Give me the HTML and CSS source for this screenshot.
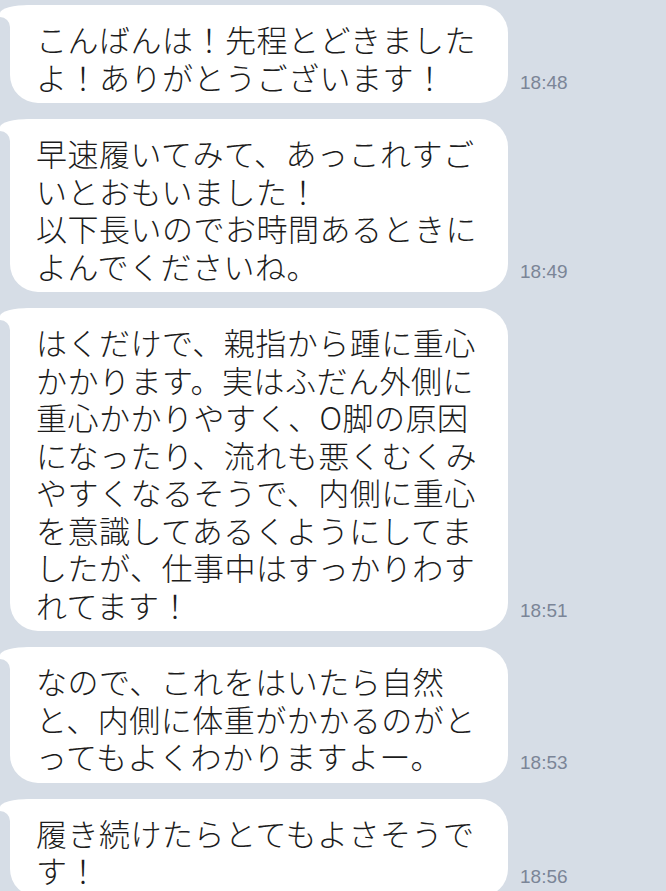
FILE: index.html
```html
<!DOCTYPE html>
<html lang="ja">
<head>
  <meta charset="UTF-8">
  <title>トーク</title>
  <link rel="stylesheet" href="styles.css">
</head>
<body>
  <div class="chat">
    <div class="row">
      <div class="bubble">こんばんは！先程とどきました<br>よ！ありがとうございます！</div>
      <span class="time">18:48</span>
    </div>
    <div class="row">
      <div class="bubble">早速履いてみて、あっこれすご<br>いとおもいました！<br>以下長いのでお時間あるときに<br>よんでくださいね。</div>
      <span class="time">18:49</span>
    </div>
    <div class="row">
      <div class="bubble">はくだけで、親指から踵に重心<br>かかります。実はふだん外側に<br>重心かかりやすく、O脚の原因<br>になったり、流れも悪くむくみ<br>やすくなるそうで、内側に重心<br>を意識してあるくようにしてま<br>したが、仕事中はすっかりわす<br>れてます！</div>
      <span class="time">18:51</span>
    </div>
    <div class="row">
      <div class="bubble">なので、これをはいたら自然<br>と、内側に体重がかかるのがと<br>ってもよくわかりますよー。</div>
      <span class="time">18:53</span>
    </div>
    <div class="row">
      <div class="bubble">履き続けたらとてもよさそうで<br>す！</div>
      <span class="time">18:56</span>
    </div>
  </div>
</body>
</html>
```

FILE: styles.css
```css
html {
  overflow: hidden;
}
body {
  margin: 0;
  background: #d6dde6;
  font-family: "Noto Sans CJK JP", "Noto Sans", sans-serif;
}
.chat {
  display: flex;
  flex-direction: column;
  gap: 16px;
  padding: 5px 0 0 10px;
}
.row {
  display: flex;
  align-items: flex-end;
  gap: 12px;
}
.bubble {
  position: relative;
  isolation: isolate;
  width: 498px;
  box-sizing: border-box;
  padding: 15px 28px 8px 26px;
  background: #fff;
  border-radius: 20px 28px 28px 28px;
  color: #1c1c1c;
  font-size: 31px;
  font-weight: 300;
  letter-spacing: 0.5px;
  line-height: 37.5px;
  white-space: nowrap;
}
/* tail at the top left */
.bubble::before {
  content: "";
  position: absolute;
  z-index: -1;
  left: -10px;
  top: 0;
  width: 44px;
  height: 22px;
  background: #fff;
  border-top-left-radius: 30px 8px;
}
.bubble::after {
  content: "";
  position: absolute;
  z-index: -1;
  left: -20px;
  top: 12px;
  width: 20px;
  height: 20px;
  border-radius: 50%;
  background: #d6dde6;
}
.time {
  margin-bottom: 11px;
  font-family: "Liberation Sans", Arial, sans-serif;
  font-size: 19px;
  line-height: 19px;
  color: #7b8597;
}
```
